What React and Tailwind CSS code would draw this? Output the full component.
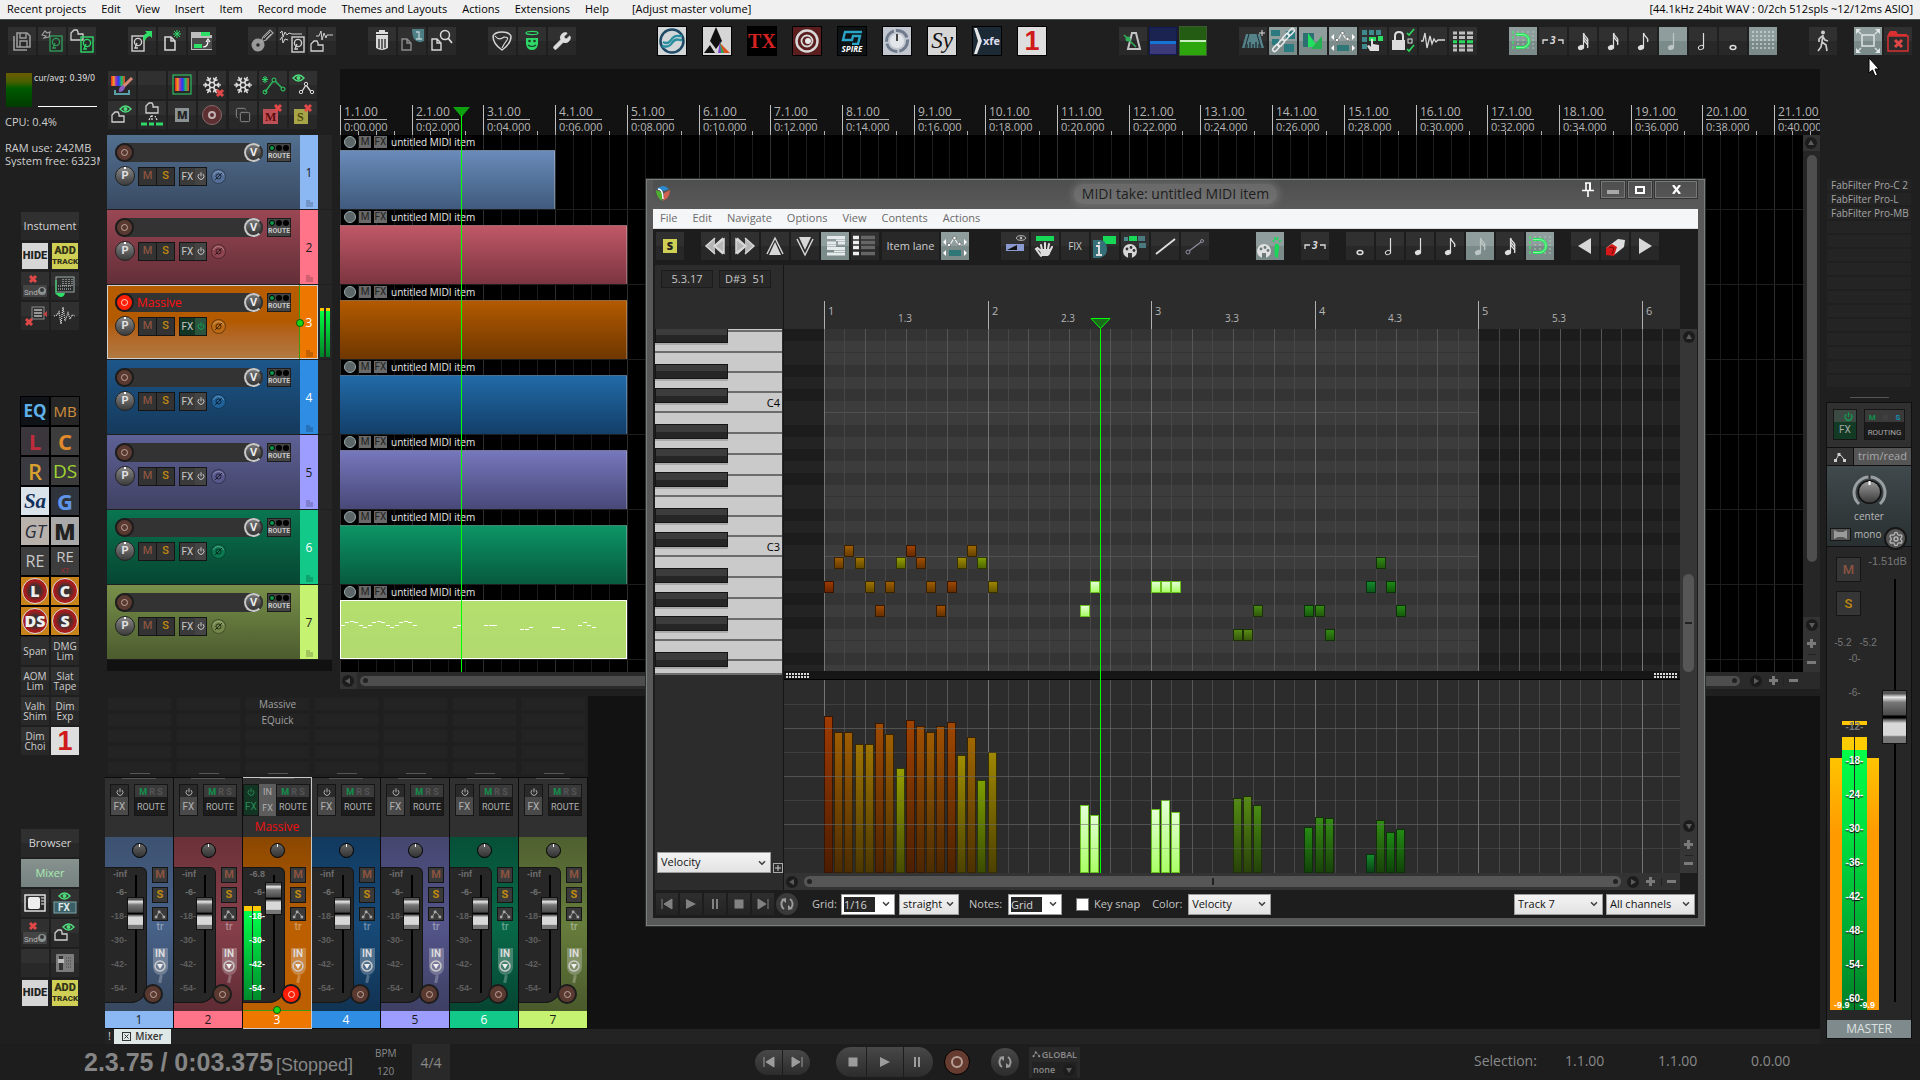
import React from 'react';
import { ChevronDown, Copy, Power, Settings, Snowflake, Wrench } from 'lucide-react';

const PX_PER_BAR = 71.7;
const PX_PER_16TH = 10.22;
const ROLL_LEFT = 40;
const TOP_PITCH = 66;

const tracks = [
  { id: 1, bars: 3, body: 'from-[#52708f] to-[#394a63]', item: 'from-[#6a8cba] to-[#3f5a7c]', strip: 'from-[#3d5271] via-[#48628a] to-[#37485f]', tag: 'bg-[#8bb7f3] text-[#1a1a1a]', ph: 'bg-[#54709a]' },
  { id: 2, bars: 4, body: 'from-[#9a4754] to-[#632f38]', item: 'from-[#c05867] to-[#7c3540]', strip: 'from-[#6b3139] via-[#87404b] to-[#5f2c34]', tag: 'bg-[#ff7488] text-[#1a1a1a]', ph: 'bg-[#8f4550]' },
  { id: 3, bars: 4, name: 'Massive', selected: true, body: 'from-[#b85c00] via-[#b35a00] to-[#b07a42]', item: 'from-[#b35a00] to-[#6f3700]', strip: 'from-[#8a4700] via-[#bb5f00] to-[#bb5f00]', tag: 'bg-[#ee7700] text-white', ph: 'bg-[#bd6a14]' },
  { id: 4, bars: 4, body: 'from-[#1c5689] to-[#153a5c]', item: 'from-[#226ba8] to-[#123f69]', strip: 'from-[#123a60] via-[#174a78] to-[#113353]', tag: 'bg-[#2f8de4] text-white', ph: 'bg-[#20629a]' },
  { id: 5, bars: 4, body: 'from-[#5e6196] to-[#404163]', item: 'from-[#7777bd] to-[#484878]', strip: 'from-[#45466f] via-[#54558a] to-[#3e3f63]', tag: 'bg-[#9d9dff] text-[#1a1a1a]', ph: 'bg-[#58588c]' },
  { id: 6, bars: 4, body: 'from-[#0a7550] to-[#064632]', item: 'from-[#0d9566] to-[#075a3e]', strip: 'from-[#065038] via-[#086a49] to-[#054532]', tag: 'bg-[#12c98a] text-white', ph: 'bg-[#0b7852]' },
  { id: 7, bars: 4, midi: true, body: 'from-[#78904a] to-[#4c5c2e]', item: 'from-[#b4e06e] to-[#b1d96f]', strip: 'from-[#4f6030] via-[#677d3c] to-[#4a5a2c]', tag: 'bg-[#c6f272] text-[#1a1a1a]', ph: 'bg-[#73884a]' },
];

// [sixteenth, pitch, velocity bar height]
const notes = [
  [0, 45, 157], [1, 47, 141], [2, 48, 141], [3, 47, 129], [4, 45, 129], [5, 43, 150], [6, 45, 139], [7, 47, 105],
  [8, 48, 153], [9, 47, 147], [10, 45, 141], [11, 43, 147], [12, 45, 151], [13, 47, 118], [14, 48, 136], [15, 47, 93],
  [16, 45, 121], [25, 43, 68, true], [26, 45, 58, true], [32, 45, 64, true], [33, 45, 73, true], [34, 45, 61, true],
  [40, 41, 75], [41, 41, 77], [42, 43, 68], [47, 43, 46], [48, 43, 56], [49, 41, 55], [53, 45, 19], [54, 47, 53],
  [55, 45, 41], [56, 43, 44],
];

const noteX = (i) => ROLL_LEFT + Math.round(i * PX_PER_16TH);
const isBlack = (p) => [1, 3, 6, 8, 10].includes(p % 12);

const noteFill = (h, selected, low) => {
  if (selected) return { background: 'linear-gradient(#e4ffd6, #a9ff66)', borderColor: '#6abf1e' };
  const hue = Math.round(22 + (157 - h) * 0.8);
  const sat = h > 80 ? 100 : 75;
  return {
    background: `linear-gradient(hsl(${hue} ${sat}% 31%), hsl(${hue} ${sat}% ${low}%))`,
    borderColor: `hsl(${hue} ${sat}% 11%)`,
  };
};

/* ---------- icons ---------- */

function Svg({ children, className = 'h-7 w-7', box = '0 0 28 28' }) {
  return (
    <svg viewBox={box} className={className} fill="none" aria-hidden="true">
      {children}
    </svg>
  );
}

const Cross = ({ x, y, s = 7 }) => (
  <path d={`M${x} ${y}l${s} ${s}M${x + s} ${y}l${-s} ${s}`} stroke="#e04848" strokeWidth="3" />
);
const Folder = ({ x, y, c = '#d0d0d0' }) => (
  <path d={`M${x} ${y + 10}V${y + 3}l3-3h3l1 2v2h5v6z`} stroke={c} strokeWidth="1.3" />
);
const Disk = ({ x, y, c = '#d0d0d0' }) => (
  <g stroke={c} strokeWidth="1.4">
    <rect x={x} y={y} width="12" height="15" />
    <circle cx={x + 6} cy={y + 6} r="3.6" />
    <path d={`M${x + 5} ${y + 7}l-2 5h3`} />
  </g>
);
const EyeMark = ({ x, y }) => (
  <g>
    <path d={`M${x} ${y + 3}q5.500-6 11 0q-5.500 6-11 0z`} stroke="#4fdc7c" strokeWidth="1.4" />
    <circle cx={x + 5.5} cy={y + 3} r="2" fill="#4fdc7c" />
  </g>
);

function Note({ flags = 0, open, whole, dim }) {
  const c = dim ? '#bcc6c4' : '#dedede';
  return (
    <Svg>
      {whole ? (
        <ellipse cx="14" cy="20.500" rx="2.800" ry="2" stroke={c} strokeWidth="1.6" />
      ) : (
        <>
          <ellipse cx="12" cy="20.500" rx="2.700" ry="2" fill={open ? 'none' : c} stroke={c} strokeWidth="1" transform="rotate(-20 12 20.500)" />
          <path d="M14.500 20V6" stroke={c} strokeWidth="1.2" />
        </>
      )}
      {Array.from({ length: flags }, (_, i) => (
        <path key={i} d={`M14.500 ${6 + i * 3}q1 3 3 4.500t1 4.500`} stroke={c} strokeWidth="1.3" />
      ))}
    </Svg>
  );
}

const Triplet = () => (
  <Svg>
    <path d="M4 17v-4h5M24 17v-4h-5" stroke="#dcdcdc" strokeWidth="1.3" />
    <text x="11" y="17" fontSize="10" fontWeight="700" fontStyle="italic" fontFamily="Open Sans, sans-serif" fill="#dcdcdc">3</text>
  </Svg>
);

const Magnet = () => (
  <Svg>
    <path d="M9 4v20M14 4v20M19 4v20M24 4v20" stroke="#a9c8b8" strokeDasharray="2 2" />
    <path d="M4 4v20" stroke="#2bff5a" strokeDasharray="3 2" />
    <path d="M7 7.500h6.500a6.500 6.500 0 0 1 0 13H7" stroke="#27e25a" strokeWidth="3" />
    <path d="M7 7.500h6.500a6.500 6.500 0 0 1 0 13H7" stroke="#9dffb5" strokeWidth="0.8" />
  </Svg>
);

const EnvItem = () => (
  <Svg>
    <rect x="8" y="18" width="12" height="6" fill="#2f7676" />
    <path d="M6 14l3-1 4-7 4 6 4 1" stroke="#eee" strokeWidth="1.2" />
    <g fill="#fff" stroke="#444" strokeWidth="0.6">
      <circle cx="8" cy="13" r="1.700" /><circle cx="13.500" cy="6" r="1.700" /><circle cx="18.500" cy="12" r="1.700" />
    </g>
    <path d="M2 10l3-3v6zM26 10l-3-3v6zM2 21l3-3v6zM26 21l-3-3v6z" fill="#fff" />
  </Svg>
);

const Envelope = ({ c = '#d0d0d0', className = 'h-7 w-7' }) => (
  <Svg className={className}>
    <path d="M5 21l7-12 6 4 5 8" stroke={c} strokeWidth="2" />
    <g fill={c}><rect x="2" y="18" width="6" height="6" /><rect x="9" y="6" width="6" height="6" /><rect x="20" y="18" width="6" height="6" /></g>
  </Svg>
);

const icons = {
  save: (
    <Svg>
      <path d="M9 6h10l3 3v11H9zM6 9v14h13" stroke="#9c9c9c" strokeWidth="1.6" />
      <path d="M12 6v5h6V6M12 20v-6h7v6" stroke="#9c9c9c" strokeWidth="1.4" />
    </Svg>
  ),
  load: (
    <Svg>
      <Disk x={12} y={9} c="#2f9a58" />
      <path d="M4 8l3-4 2 2 3-1-1 5-5 1 2-2z" stroke="#9c9c9c" strokeWidth="1.2" />
    </Svg>
  ),
  folderDisk: <Svg><Folder x={3} y={3} /><Disk x={13} y={10} c="#2fd868" /></Svg>,
  diskOut: <Svg><Disk x={4} y={9} /><path d="M15 12c0-4 2-5 4-6l-2-2h7v7l-2-2c-3 1-4 2-5 5z" fill="#2fe068" /></Svg>,
  newFile: (
    <Svg>
      <path d="M7 23V10h6l4 4v9zM13 10v4h4" stroke="#d8d8d8" strokeWidth="1.5" />
      <path d="M19 3v8M15 7h8M16 4l6 6M22 4l-6 6" stroke="#2fd868" />
    </Svg>
  ),
  openFolder: (
    <Svg>
      <path d="M3 23V5h10l2 3h9v15z" fill="#bdbdbd" />
      <rect x="13" y="5" width="9" height="4" fill="#2fe068" />
      <rect x="4" y="11" width="20" height="11" fill="#4a4a4a" />
      <rect x="6" y="17" width="8" height="4" fill="#2fe068" />
      <path d="M15 20q5 0 5-6M18 15l2-3 2 3" stroke="#fff" strokeWidth="1.2" />
    </Svg>
  ),
  cd: (
    <Svg>
      <circle cx="10" cy="18" r="6.500" fill="#9a9a9a" /><circle cx="10" cy="18" r="1.800" fill="#2b2b2b" />
      <path d="M13 15l2-5 7-7 3 3-7 7z" stroke="#a8a8a8" strokeWidth="1.2" /><path d="M16 11l6-6M18 12l5-5" stroke="#a8a8a8" />
    </Svg>
  ),
  waveDisk: <Svg><path d="M2 6l2-2 1 6 2-5 2 3 2-2 3 1h10M2 13l2-3 1 6 2-4 3 1" stroke="#cfcfcf" /><Disk x={14} y={10} /></Svg>,
  waveFolder: <Svg><path d="M8 9h3l2-5 1 9 2-7 2 5 1-3h6" stroke="#cfcfcf" /><Folder x={3} y={14} /></Svg>,
  trash: (
    <Svg>
      <path d="M8 6h12M11 4h6M8 9h12" stroke="#ddd" strokeWidth="2" />
      <path d="M8 10h12v11q-6 4-12 0z" fill="#d8d8d8" /><path d="M11 12v9M14 12v10M17 12v9" stroke="#333" strokeWidth="1.400" />
    </Svg>
  ),
  info: (
    <Svg>
      <path d="M4 23V12h5l4 4v7zM9 12v4h4" stroke="#8c8c8c" strokeWidth="1.400" />
      <path d="M14 2h12v12q-6 3-10-2-2-4-2-10z" fill="#4f7f86" />
      <path d="M18 5h3v7M18 12h6" stroke="#b9cfd2" strokeWidth="1.300" />
    </Svg>
  ),
  findFile: (
    <Svg>
      <path d="M4 23V12h5l4 4v7zM9 12v4h4" stroke="#d8d8d8" strokeWidth="1.400" />
      <circle cx="17" cy="8" r="4.500" stroke="#d8d8d8" strokeWidth="1.500" /><path d="M20 11l4 5" stroke="#d8d8d8" strokeWidth="1.800" />
    </Svg>
  ),
  pick: (
    <Svg>
      <path d="M14 23C8 19 5 14 5 9q2-4 9-4t9 4c0 5-3 10-9 14z" stroke="#d6d6d6" strokeWidth="1.500" />
      <path d="M7 9q4 5 9 1q5 0 3 3q-3 4-5 8" stroke="#d6d6d6" strokeWidth="1.200" />
    </Svg>
  ),
  angel: (
    <Svg>
      <ellipse cx="14" cy="6" rx="6" ry="1.600" stroke="#2fd868" strokeWidth="1.300" />
      <path d="M8 11h12v6q-1 6-6 6t-6-6z" fill="#2fd868" />
      <circle cx="11.500" cy="14" r="1.300" fill="#1a3a22" /><circle cx="16.500" cy="14" r="1.300" fill="#1a3a22" />
      <path d="M10 18q4 3 8 0" stroke="#1a3a22" strokeWidth="1.200" />
    </Svg>
  ),
  metronome: (
    <Svg>
      <path d="M9 22l4-16h4l4 16z" stroke="#c4c4c4" strokeWidth="2" />
      <path d="M5 8l12 12" stroke="#2fae58" strokeWidth="1.600" /><circle cx="9" cy="12" r="2.500" fill="#2fae58" />
    </Svg>
  ),
  metroAdd: (
    <Svg>
      <path d="M7 7h14l4 14H3z" fill="#56838a" /><path d="M10 7L6 21M18 7l4 14" stroke="#1e2a2c" />
      <path d="M8 17v4M11 15v6M14 17v4M17 15v6M20 17v4" stroke="#111" /><path d="M23 3v6M20 6h6" stroke="#ddd" />
    </Svg>
  ),
  chain: (
    <Svg>
      <g fill="#2b7a80"><rect x="2" y="3" width="9" height="6" /><rect x="17" y="4" width="9" height="8" /><rect x="3" y="12" width="7" height="6" /><rect x="15" y="17" width="10" height="8" /></g>
      <g stroke="#e6eaea" strokeWidth="1.500">
        <rect x="-4" y="-2" width="8" height="4" rx="2" transform="translate(7 21) rotate(-48)" />
        <rect x="-4" y="-2" width="8" height="4" rx="2" transform="translate(12 16) rotate(-48)" />
        <rect x="-4" y="-2" width="8" height="4" rx="2" transform="translate(17 10) rotate(-48)" />
        <rect x="-4" y="-2" width="8" height="4" rx="2" transform="translate(22 5) rotate(-48)" />
      </g>
    </Svg>
  ),
  crossfade: (
    <Svg>
      <rect x="4" y="6" width="11" height="14" fill="#2b6f73" /><path d="M9 6v14h10z" fill="#24e060" />
      <path d="M23 22V9L12 22z" fill="#24b050" />
    </Svg>
  ),
  matrix: (
    <Svg>
      <g fill="#3e8a8e"><rect x="3" y="3" width="5" height="5" /><rect x="10" y="3" width="5" height="5" /><rect x="17" y="3" width="5" height="5" /><rect x="3" y="10" width="5" height="5" /><rect x="3" y="17" width="5" height="5" /></g>
      <rect x="10" y="10" width="7" height="4" fill="#2be060" /><rect x="19" y="9" width="5" height="5" fill="#2be060" />
      <path d="M11 24l-3-5 2-1 2 2v-8h2v5l6 1v6z" fill="#dedede" />
    </Svg>
  ),
  lock: (
    <Svg>
      <path d="M6 13V9q0-4 4-4t4 4v4" stroke="#ddd" strokeWidth="2" /><rect x="3" y="13" width="13" height="10" fill="#ddd" />
      <rect x="19" y="12" width="4" height="4" stroke="#ddd" />
      <path d="M18 6l2 2 5-6M18 22l2 2 5-6" stroke="#2bd860" strokeWidth="1.600" />
    </Svg>
  ),
  wave: <Svg><path d="M2 14h2l2-8 2 15 3-12 2 8 2-5 2 3 2-2h7" stroke="#d6d6d6" strokeWidth="1.300" /></Svg>,
  gridLanes: (
    <Svg>
      <g stroke="#bdbdbd" strokeWidth="3"><path d="M4 6h4M10 6h6M18 6h6M4 10.500h4M10 10.500h6M18 10.500h6M4 19h4M10 19h6M18 19h6M4 23h4M10 23h6M18 23h6" /></g>
      <path d="M4 14.700h4M10 14.700h6M18 14.700h6" stroke="#2ad860" strokeWidth="3" />
    </Svg>
  ),
  gridDots: (
    <Svg><path d="M4 4v20M8 4v20M12 4v20M16 4v20M20 4v20M24 4v20" stroke="#e8eeee" strokeDasharray="2 2" /></Svg>
  ),
  walk: (
    <Svg>
      <circle cx="14" cy="5.500" r="2" fill="#ccc" />
      <path d="M14 8l-1 7 4 3 1 6M13 15l-1 5-3 4M13 9l-3 3v3M14 10l2 3 3 1" stroke="#ccc" strokeWidth="1.700" />
    </Svg>
  ),
  expand: (
    <Svg>
      <rect x="8" y="8" width="12" height="11" stroke="#dfe5e5" strokeWidth="1.500" />
      <path d="M7 7L3 3M21 7l4-4M7 21l-4 4M21 21l4 4" stroke="#dfe5e5" strokeWidth="1.200" />
      <path d="M2 2h5L2 7zM26 2h-5l5 5zM2 26v-5l5 5zM26 26v-5l-5 5z" fill="#dfe5e5" />
    </Svg>
  ),
  closeProj: (
    <Svg><path d="M4 24V7l2-3h6l2 3h9v3" fill="#d83030" /><path d="M4 24V9h20v15z" fill="#2b2b2b" stroke="#d83030" strokeWidth="1.500" /><Cross x={11} y={13} s={7} /></Svg>
  ),
  spectrumBrush: (
    <Svg>
      <rect x="3" y="5" width="14" height="10" fill="url(#rainbow)" />
      <path d="M24 7l-9 9" stroke="#d68a78" strokeWidth="3" /><path d="M15 14q-5 2-4 7 5 0 6-5z" fill="#8b5fc0" />
      <path d="M7 19v4h14v-4" stroke="#5aa0a8" strokeWidth="2" />
    </Svg>
  ),
  spectrum: <Svg><rect x="5" y="4" width="18" height="19" stroke="#2fd868" /><rect x="7" y="7" width="14" height="13" fill="url(#rainbow)" /></Svg>,
  envAdd: (
    <Svg>
      <path d="M6 21l9-12 9 9" stroke="#2fae58" strokeWidth="1.500" /><circle cx="6" cy="21" r="2" stroke="#2fd868" /><circle cx="15" cy="9" r="2" fill="#2b2b2b" stroke="#2fd868" /><circle cx="24" cy="18" r="2" fill="#2b2b2b" stroke="#2fd868" />
      <path d="M6 5v7M3 8.500h6M4 6l4 5M8 6l-4 5" stroke="#2fd868" />
    </Svg>
  ),
  envEye: (
    <Svg>
      <EyeMark x={4} y={4} />
      <path d="M12 22l5-8 6 8" stroke="#ddd" strokeWidth="1.300" /><g fill="#2b2b2b" stroke="#ddd"><circle cx="12" cy="21" r="1.700" /><circle cx="17" cy="13" r="1.700" /><circle cx="23" cy="21" r="1.700" /></g>
    </Svg>
  ),
  folderEye: <Svg><Folder x={4} y={11} /><EyeMark x={12} y={5} /></Svg>,
  folderTree: (
    <Svg>
      <Folder x={8} y={2} /><path d="M11 19l2-4M14 19v-5M19 19l-2-4" stroke="#ddd" strokeWidth="1.300" strokeDasharray="2 1" />
      <path d="M3 23h6M11 23h5M18 23h7" stroke="#2fd868" strokeWidth="3" />
    </Svg>
  ),
  sndOff: (
    <Svg>
      <Cross x={9} y={4} s={6} /><rect x="2" y="13" width="24" height="12" rx="1" fill="#444" />
      <text x="3" y="23" fontSize="8" fill="#b8b8b8" fontFamily="Roboto, sans-serif">Snd</text>
      <circle cx="21" cy="19" r="4" fill="#8a9294" /><circle cx="21" cy="18" r="2" fill="#333" />
    </Svg>
  ),
  mixGrid: (
    <Svg>
      <rect x="5" y="5" width="18" height="15" stroke="#9aa" /><path d="M12 7v8M15 7v8M18 7v8M21 7v8M7 17h14M7 14h14" stroke="#cfd6d6" strokeDasharray="1 1" />
      <path d="M5 8v14h8" stroke="#2fe068" /><path d="M5 21h9q-1 4-4 4t-5-4z" fill="#2fe068" />
    </Svg>
  ),
  listOff: (
    <Svg>
      <rect x="11" y="5" width="12" height="12" stroke="#8a8a8a" />
      <path d="M13 8h8M13 11h8M13 14h8" stroke="#b8b8b8" strokeWidth="1.300" /><path d="M26 9v6l-4-3z" fill="#c04040" /><Cross x={5} y={17} s={6} />
    </Svg>
  ),
  dotWave: <Svg><path d="M3 14l3-1 2-3 2 12 2-17 2 14 3-8 2 6 2-4 3 1" stroke="#d8d8d8" strokeWidth="1.300" strokeDasharray="1 1" /></Svg>,
  monitor: (
    <Svg>
      <rect x="4" y="6" width="20" height="16" stroke="#e0e0e0" strokeWidth="1.500" /><rect x="7" y="8" width="12" height="12" rx="2" fill="#eee" />
      <path d="M20 9h3M20 12h3M20 15h3" stroke="#eee" />
    </Svg>
  ),
  fxEye: (
    <Svg>
      <EyeMark x={8} y={4} /><rect x="3" y="13" width="22" height="11" fill="#3a5f64" stroke="#7fa6aa" />
      <text x="7" y="22" fontSize="10" fontWeight="700" fill="#dfe8e8" fontFamily="Roboto, sans-serif">FX</text>
    </Svg>
  ),
  strip: (
    <Svg>
      <rect x="5" y="5" width="18" height="18" rx="1" fill="#7c7c7c" /><rect x="8" y="7" width="4" height="14" fill="#333" /><rect x="7" y="10" width="6" height="4" fill="#bbb" />
      <path d="M15 9h6M15 12h6M15 15h6M15 18h6" stroke="#444" strokeDasharray="1 1" />
    </Svg>
  ),
};

function ToolButton({ label, active, children }) {
  return (
    <button
      type="button"
      aria-label={label}
      className={
        active
          ? 'flex h-7 w-7 shrink-0 items-center justify-center overflow-hidden bg-[linear-gradient(#8f9e9c_0_50%,#7b8b89_50%)]'
          : 'flex h-7 w-7 shrink-0 items-center justify-center overflow-hidden bg-[linear-gradient(#303030_0_50%,#282828_50%)]'
      }
    >
      {children}
    </button>
  );
}

const Group = ({ children, className = '' }) => <div className={`flex gap-[2px] ${className}`}>{children}</div>;

/* ---------- menu and main toolbar ---------- */

function MenuBar() {
  const items = ['Recent projects', 'Edit', 'View', 'Insert', 'Item', 'Record mode', 'Themes and Layouts', 'Actions', 'Extensions', 'Help', '[Adjust master volume]'];
  return (
    <header className="flex h-5 items-center justify-between border-b border-[#4a5250] bg-[#f0f0f0] px-[7px] pb-px text-[11px] leading-4 text-black">
      <nav className="flex gap-[15px]">
        {items.map((m, i) => (
          <button key={m} type="button" className={i === 10 ? 'ml-2' : ''}>{m}</button>
        ))}
      </nav>
      <span>[44.1kHz 24bit WAV : 0/2ch 512spls ~12/12ms ASIO]</span>
    </header>
  );
}

function Logos() {
  const box = 'flex h-[30px] w-[30px] items-center justify-center overflow-hidden border border-black';
  return (
    <div className="ml-[81px] flex gap-[15px]">
      <button type="button" aria-label="Synth 1" className={`${box} bg-[#d3d7d8]`}>
        <Svg>
          <circle cx="14" cy="14" r="11.500" stroke="#1f4a66" strokeWidth="2.500" />
          <path d="M5 15q5 3 8-2t8-4h3M4 19q7 2 10-3t8-3h2" stroke="#2a8fa0" strokeWidth="2.400" />
        </Svg>
      </button>
      <button type="button" aria-label="Prism" className={`${box} bg-[#d6d6d6]`}>
        <Svg>
          <path d="M13 0l6 14-6 8-6-8z" fill="#111" /><path d="M1 26l6-8 5 8z" fill="#111" />
          <path d="M15 26l2-12 2 12z" fill="#7a3fd0" /><path d="M18 26l-1-11 5 11z" fill="#2fa84f" /><path d="M21 26l-4-10 10 10z" fill="#d85020" />
        </Svg>
      </button>
      <button type="button" className={`${box} bg-black font-['Liberation_Serif'] text-[20px] font-bold text-[#d42222]`}>TX</button>
      <button type="button" aria-label="Battery" className={`${box} bg-[#5b1e1e]`}>
        <Svg>
          <circle cx="14" cy="14" r="10.500" fill="#5b1e1e" stroke="#d8d8d8" strokeWidth="2.500" />
          <circle cx="14" cy="14" r="5.500" stroke="#d8d8d8" strokeWidth="1.800" /><circle cx="15" cy="14" r="3" fill="#e8e8e8" />
        </Svg>
      </button>
      <button type="button" className={`${box} flex-col bg-[#0d1214] text-[8px] font-bold leading-[8px] text-white italic`}>
        <Svg className="h-[15px] w-6" box="0 0 24 15"><path d="M22 2H5L3 10h9l1-4h7l-2 8h-6" stroke="#2aa5c8" strokeWidth="2.400" /></Svg>
        SPIRE
      </button>
      <button type="button" aria-label="Knob synth" className={`${box} bg-[#c3c8d0]`}>
        <Svg>
          <circle cx="14" cy="14" r="10.500" stroke="#6f7a8c" strokeWidth="3" strokeDasharray="14 2" /><circle cx="14" cy="14" r="7" fill="#e2e5ea" />
          <path d="M14 7v7" stroke="#444" strokeWidth="2" />
        </Svg>
      </button>
      <button type="button" className={`${box} bg-[#d6d6d6] font-['Liberation_Serif'] text-[23px] text-[#111] italic`}>Sy</button>
      <button type="button" className={`${box} bg-[#1c2a36] text-[11px] font-bold text-[#dde]`}>
        <Svg className="h-7 w-[9px] shrink-0" box="0 0 9 28"><path d="M0 1h3l5 13-5 13H0l4-13z" fill="#e6e6e6" /></Svg>
        xfe
      </button>
      <button type="button" className={`${box} bg-[#dedede] font-['Liberation_Sans'] text-[27px] font-bold text-[#cf1b1b]`}>1</button>
    </div>
  );
}

function MainToolbar() {
  return (
    <div className="flex h-[49px] items-center bg-[#1f1f1f] pb-[9px] pl-2 pt-[2px]">
      <div className="flex gap-8">
        <Group>
          <ToolButton label="Save project">{icons.save}</ToolButton>
          <ToolButton label="Load">{icons.load}</ToolButton>
          <ToolButton label="Open project folder">{icons.folderDisk}</ToolButton>
        </Group>
        <Group>
          <ToolButton label="Render">{icons.diskOut}</ToolButton>
          <ToolButton label="New project">{icons.newFile}</ToolButton>
          <ToolButton label="Open project">{icons.openFolder}</ToolButton>
        </Group>
        <Group>
          <ToolButton label="Burn disc">{icons.cd}</ToolButton>
          <ToolButton label="Save waves">{icons.waveDisk}</ToolButton>
          <ToolButton label="Wave folder">{icons.waveFolder}</ToolButton>
        </Group>
        <Group>
          <ToolButton label="Clean project">{icons.trash}</ToolButton>
          <ToolButton label="Project info">{icons.info}</ToolButton>
          <ToolButton label="Find">{icons.findFile}</ToolButton>
        </Group>
        <Group>
          <ToolButton label="Guitar tools">{icons.pick}</ToolButton>
          <ToolButton label="Angel">{icons.angel}</ToolButton>
          <ToolButton label="Preferences"><Wrench className="h-5 w-5 fill-[#ddd] text-[#ddd]" strokeWidth={1} /></ToolButton>
        </Group>
      </div>
      <Logos />
      <div className="ml-auto flex items-center gap-8 pr-2">
        <Group className="items-center">
          <ToolButton label="Metronome">{icons.metronome}</ToolButton>
          <button type="button" aria-label="Sync view" className="h-7 w-7 border border-[#101a55] bg-[linear-gradient(#1b2350_0_50%,#1573d6_50%_60%,#3c3a78_60%)]" />
          <button type="button" aria-label="Monitor level" className="h-[30px] w-7 border border-[#3a5a30] bg-[linear-gradient(#245c14_0_48%,#c8f0c0_48%_54%,#2da50c_54%)]" />
        </Group>
        <Group>
          <ToolButton label="Tempo">{icons.metroAdd}</ToolButton>
          <ToolButton label="Group items" active>{icons.chain}</ToolButton>
          <ToolButton label="Auto crossfade" active>{icons.crossfade}</ToolButton>
          <ToolButton label="Move envelopes with items" active><EnvItem /></ToolButton>
          <ToolButton label="Matrix">{icons.matrix}</ToolButton>
          <ToolButton label="Lock">{icons.lock}</ToolButton>
          <ToolButton label="Waveform">{icons.wave}</ToolButton>
          <ToolButton label="Lanes">{icons.gridLanes}</ToolButton>
        </Group>
        <Group>
          <ToolButton label="Snap" active><Magnet /></ToolButton>
          <ToolButton label="Triplet"><Triplet /></ToolButton>
          <ToolButton label="1/32"><Note flags={3} /></ToolButton>
          <ToolButton label="1/16"><Note flags={2} /></ToolButton>
          <ToolButton label="1/8"><Note flags={1} /></ToolButton>
          <ToolButton label="1/4" active><Note dim /></ToolButton>
          <ToolButton label="1/2"><Note open /></ToolButton>
          <ToolButton label="1"><Note whole /></ToolButton>
          <ToolButton label="Grid lines" active>{icons.gridDots}</ToolButton>
        </Group>
        <div className="flex gap-[17px]">
          <ToolButton label="Walk">{icons.walk}</ToolButton>
          <Group>
            <ToolButton label="Full screen" active>{icons.expand}</ToolButton>
            <ToolButton label="Close project">{icons.closeProj}</ToolButton>
          </Group>
        </div>
      </div>
    </div>
  );
}

/* ---------- left side ---------- */

function HideAdd() {
  return (
    <>
      <button type="button" className="h-7 w-7 border border-[#222] bg-[#d6d6d6] font-['Roboto'] text-[11px] font-black text-[#222]">HIDE</button>
      <button type="button" className="h-7 w-7 border border-[#222] bg-[#cfcf55] font-['Roboto'] text-[8px] leading-[11px] font-black text-[#333318]">
        <span className="block text-[11px]">ADD</span>TRACK
      </button>
    </>
  );
}

const plugins = [
  ['EQ', 'bg-[#0f1318] text-[17px] font-bold text-[#5fb0e8]'], ['MB', 'bg-[#262626] text-[15px] text-[#d08f3c]'],
  ['L', 'bg-[#3a363c] text-[22px] font-bold text-[#c12c3c]'], ['C', 'bg-[#3d3d3d] text-[22px] font-bold text-[#e08a2a]'],
  ['R', 'bg-[#3a3a40] text-[22px] font-semibold text-[#d8a030]'], ['DS', 'bg-[#3a3a3a] text-[19px] text-[#9fd430]'],
  ['Sa', "bg-[#dbe3ea] font-['Liberation_Serif'] text-[21px] font-bold text-[#12305a] italic"], ['G', 'bg-[#2f343c] text-[22px] font-bold text-[#5f95e8]'],
  ['GT', 'bg-[#b9b1ab] text-[18px] text-[#2a2f3c] italic'], ['M', 'bg-[#a9a9a9] text-[22px] font-extrabold text-[#222]'],
  ['RE', 'bg-[#3d3d3d] text-[16px] text-[#c8c8c8]'], ['RE', 'bg-[#3d3d3d] text-[15px] text-[#c8c8c8]', 'XT'],
];

const shortcuts = ['Span', 'DMG Lim', 'AOM Lim', 'Slat Tape', 'Valh Shim', 'Dim Exp', 'Dim Choi'];

function Sidebar() {
  const text = 'w-full h-7 col-span-2 bg-[linear-gradient(#303030_0_50%,#282828_50%)] text-[11px] text-[#d4d4d4]';
  return (
    <aside className="w-[107px] shrink-0 bg-[#1f1f1f] pt-1 text-[#d0d0d0]">
      <div className="flex h-[35px] gap-[2px] overflow-hidden pl-[6px] pr-[10px]">
        <div className="h-[34px] w-[26px] shrink-0 bg-[linear-gradient(#6b5c00,#4a6000_25%,#005a00_45%,#003a00)]" />
        <div className="flex min-w-0 flex-1 flex-col justify-between overflow-hidden font-['DejaVu_Sans'] text-[8px] leading-3 whitespace-nowrap text-[#e0e0e0]">
          cur/avg: 0.39/0
          <i className="mb-px ml-1 h-px bg-white" />
        </div>
      </div>
      <div className="mt-[7px] pl-[5px] text-[11px] leading-[14px] whitespace-nowrap">
        <p>CPU: 0.4%</p>
        <p className="mt-3">RAM use: 242MB</p>
        <p className="w-[95px] overflow-hidden leading-3">System free: 6323M</p>
      </div>

      <div className="mt-[45px] ml-[21px] grid w-[58px] grid-cols-2 gap-[2px]">
        <button type="button" className={text}>Instument</button>
        <HideAdd />
        <ToolButton label="Remove sends">{icons.sndOff}</ToolButton>
        <ToolButton label="Routing grid">{icons.mixGrid}</ToolButton>
        <ToolButton label="Remove list">{icons.listOff}</ToolButton>
        <ToolButton label="Dotted wave">{icons.dotWave}</ToolButton>
      </div>

      <div className="mt-[66px] ml-[20px] grid w-[60px] grid-cols-2 gap-[2px] bg-black px-px py-px leading-none">
        {plugins.map(([name, cls, sub], i) => (
          <button key={i} type="button" className={`flex h-7 w-7 flex-col items-center justify-center leading-7 ${cls}`}>
            <span className={sub ? 'leading-[18px]' : ''}>{name}</span>
            {sub && <span className="text-[8px] leading-[10px] text-[#a02c2c]">{sub}</span>}
          </button>
        ))}
        {['L', 'C', 'DS', 'S'].map((n) => (
          <button key={n} type="button" className="flex h-7 w-7 items-center justify-center bg-[#c8821a]">
            <span className="flex h-[26px] w-[26px] items-center justify-center rounded-full border border-[#ddd] bg-[radial-gradient(#3a3030_30%,#a81c1c_60%)] text-[16px] font-extrabold text-[#eee]">{n}</span>
          </button>
        ))}
      </div>
      <div className="mt-px ml-[21px] grid w-[58px] grid-cols-2 gap-[2px]">
        {shortcuts.map((s) => (
          <button key={s} type="button" className="h-7 w-7 bg-[linear-gradient(#303030_0_50%,#282828_50%)] text-[10px] leading-[10px] text-[#cfcfcf]">{s}</button>
        ))}
        <button type="button" className="h-7 w-7 bg-[#dedede] font-['Liberation_Sans'] text-[27px] leading-7 font-bold text-[#cf1b1b]">1</button>
      </div>

      <div className="mt-[74px] ml-[21px] grid w-[58px] grid-cols-2 gap-[2px]">
        <button type="button" className={text}>Browser</button>
        <button type="button" className="col-span-2 h-7 bg-[linear-gradient(#87928f,#75827f)] text-[11px] text-[#a8ecb4]">Mixer</button>
        <ToolButton label="Monitor">{icons.monitor}</ToolButton>
        <ToolButton label="Show FX">{icons.fxEye}</ToolButton>
        <ToolButton label="Hide sends">{icons.sndOff}</ToolButton>
        <ToolButton label="Show folders">{icons.folderEye}</ToolButton>
        <ToolButton label="Empty" />
        <ToolButton label="Strip layout">{icons.strip}</ToolButton>
        <HideAdd />
      </div>
    </aside>
  );
}

/* ---------- track control panel ---------- */

function RecButton({ armed, className = 'h-[19px] w-[19px]' }) {
  return (
    <button
      type="button"
      aria-label="Record arm"
      className={`flex shrink-0 items-center justify-center rounded-full border-2 border-[#1c1c1c] ${armed ? 'bg-[#ff1e05]' : 'bg-[#5a3a30]'} ${className}`}
    >
      <span className={`h-[7px] w-[7px] rounded-full border ${armed ? 'border-[#ffd8d0]' : 'border-[#c0a8a0]'}`} />
    </button>
  );
}

function TrackPanel({ track }) {
  const { id, name, selected, body, tag, ph } = track;
  return (
    <div className="mb-px flex h-[74px]">
      <div className={`relative flex w-[211px] ${selected ? 'outline -outline-offset-1 outline-[#d0d0d0]' : ''}`}>
        <div className={`w-[193px] bg-linear-to-b pt-2 pl-2 ${body}`}>
          <div className="flex gap-1">
            <div className="flex h-[19px] w-[148px] items-center rounded-full bg-[#333]">
              <RecButton armed={selected} />
              <input aria-label={`Track ${id} name`} defaultValue={name} className="ml-[3px] h-4 w-full min-w-0 bg-transparent text-[12px] text-[#ff1010] outline-none" />
              <button type="button" aria-label="Volume" className="flex h-[19px] w-[19px] shrink-0 items-center justify-center rounded-full border-2 border-[#c8c8c8] border-r-[#333] bg-linear-to-b from-[#777] to-[#333] text-[11px] font-bold text-[#eee]">V</button>
            </div>
            <button type="button" className="h-[19px] w-6 border border-[#1c1c1c] bg-[#444] font-['Roboto'] text-[7px] leading-[8px] font-bold text-[#c8c8c8]">
              <span className="flex justify-center gap-px pb-px">
                <i className="h-[6px] w-[6px] rounded-full border border-black bg-[#0c9a48]" />
                <i className="h-[6px] w-[6px] rounded-full bg-black" />
                <i className="h-[6px] w-[6px] rounded-full bg-black" />
              </span>
              ROUTE
            </button>
          </div>
          <div className="mt-1 flex h-5 items-center font-['Roboto'] text-[11px]">
            <button type="button" aria-label="Pan" className="relative h-5 w-5 rounded-full border border-[#222] bg-linear-to-b from-[#8a8a8a] to-[#3c3c3c] font-bold text-[#e0e0e0]">
              P<i className="absolute top-0 left-2 h-[2px] w-[2px] bg-white" />
            </button>
            <div className="ml-[3px] flex h-[19px] w-[37px] border border-[#151515] bg-[#333] font-medium">
              <button type="button" aria-label="Mute" className="flex-1 border-r border-[#151515] text-[#8b5440]">M</button>
              <button type="button" aria-label="Solo" className="flex-1 text-[#c08a10]">S</button>
            </div>
            <div className={`ml-1 flex h-[19px] w-7 border border-[#151515] text-[10px] text-[#c8c8c8] ${selected ? 'bg-[#123524]' : 'bg-[#3a3a3a]'}`}>
              <button type="button" className="w-[15px]">FX</button>
              <button type="button" aria-label="Bypass effects" className={`flex flex-1 items-center justify-center ${selected ? 'bg-[#2c5540] text-[#12a050]' : 'bg-[#444]'}`}>
                <Power size={8} strokeWidth={3} />
              </button>
            </div>
            <button type="button" aria-label="Phase" className={`ml-1 flex h-[15px] w-[15px] items-center justify-center rounded-full border border-black/40 ${ph}`}>
              <Svg className="h-[13px] w-[13px]" box="0 0 13 13"><path d="M1 5a6 6 0 0 1 11 0" stroke="#fff" strokeOpacity="0.3" /><circle cx="6.500" cy="6.500" r="2.500" stroke="#000" strokeOpacity="0.6" /><path d="M3 10l7-7" stroke="#000" strokeOpacity="0.600" /></Svg>
            </button>
          </div>
        </div>
        <div className={`flex w-[18px] flex-col items-center justify-between pt-[30px] pb-[2px] text-[12px] leading-4 ${tag}`}>
          {id}
          <Svg className="h-[7px] w-[7px]" box="0 0 7 7"><path d="M0 0h4v2h3v5H0z" fill="#000" fillOpacity="0.180" /></Svg>
        </div>
        {selected && (
          <>
            <i className="absolute top-0 left-[192px] h-full w-px bg-[#3a9a10]" />
            <i className="absolute top-[34px] left-[189px] h-2 w-2 rounded-full border border-[#0a5a0a] bg-[#18d818]" />
          </>
        )}
      </div>
      <div className="flex w-[14px] items-end justify-center gap-[2px] bg-[#262626] pb-[2px]">
        {selected && [0, 1].map((n) => (
          <i key={n} className="h-[49px] w-1 bg-[linear-gradient(#ffc800_0_3px,#00ff40_3px,#008028)]" />
        ))}
      </div>
    </div>
  );
}

function TrackList() {
  return (
    <section className="flex w-[233px] shrink-0 flex-col bg-[#1f1f1f]">
      <div className="grid h-[66px] w-[210px] grid-cols-7 content-start gap-[2px] pt-[2px] pl-px">
        <ToolButton label="Colour brush">{icons.spectrumBrush}</ToolButton>
        <ToolButton label="Empty" />
        <ToolButton label="Colours">{icons.spectrum}</ToolButton>
        <ToolButton label="Unfreeze">
          <span className="relative"><Snowflake className="h-5 w-5 text-[#ddd]" /><Svg className="absolute -right-1 -bottom-1 h-3 w-3" box="0 0 12 12"><Cross x={3} y={3} s={6} /></Svg></span>
        </ToolButton>
        <ToolButton label="Freeze"><Snowflake className="h-5 w-5 text-[#ddd]" /></ToolButton>
        <ToolButton label="Add envelope">{icons.envAdd}</ToolButton>
        <ToolButton label="Show envelopes">{icons.envEye}</ToolButton>
        <ToolButton label="Show folder">{icons.folderEye}</ToolButton>
        <ToolButton label="Folder children">{icons.folderTree}</ToolButton>
        <ToolButton label="Mute"><span className="h-[14px] w-[14px] bg-[#8a9294] text-[11px] leading-[14px] font-extrabold text-[#222]">M</span></ToolButton>
        <ToolButton label="Record"><span className="flex h-5 w-5 items-center justify-center rounded-full border border-[#8a6a6a] bg-[#5c3030]"><i className="h-2 w-2 rounded-full border-2 border-[#c0b0b0]" /></span></ToolButton>
        <ToolButton label="Duplicate"><Copy className="h-4 w-4 text-[#888]" strokeWidth={1.5} /></ToolButton>
        <ToolButton label="Clear mutes">
          <Svg><rect x="4" y="8" width="15" height="15" fill="#c05058" /><text x="6" y="20" fontSize="12" fontWeight="700" fill="#5a0c0c" fontFamily="Liberation Serif, serif">M</text><Cross x={16} y={4} s={6} /></Svg>
        </ToolButton>
        <ToolButton label="Clear solos">
          <Svg><rect x="5" y="8" width="14" height="15" fill="#a8a448" /><text x="8" y="20" fontSize="12" fontWeight="700" fill="#4a480c" fontFamily="Liberation Serif, serif">S</text><Cross x={16} y={4} s={6} /></Svg>
        </ToolButton>
      </div>
      {tracks.map((t) => <TrackPanel key={t.id} track={t} />)}
      <div className="h-[11px] w-[225px] bg-[#111]" />
    </section>
  );
}

/* ---------- arrange view ---------- */

function ArrangeRuler() {
  return (
    <div className="relative h-[66px] shrink-0 overflow-hidden bg-[#121212] text-[#b4b4b4]">
      {Array.from({ length: 21 }, (_, i) => (
        <div key={i} className="absolute top-9 h-[30px] border-l border-[#c0c0c0] pl-[3px]" style={{ left: Math.round(i * PX_PER_BAR) }}>
          <p className="mt-px w-[43px] border-b border-[#b4b4b4] pb-px text-[12px] leading-3">{i + 1}.1.00</p>
          <p className="text-[11px] leading-[14px]">0:{String(i * 2).padStart(2, '0')}.000</p>
        </div>
      ))}
      {Array.from({ length: 84 }, (_, i) => (
        <i key={i} className="absolute bottom-0 h-1 w-px bg-[#b0b0b0]" style={{ left: Math.round((i * PX_PER_BAR) / 4) }} />
      ))}
      <Svg className="absolute top-[38px] left-[113px] h-[10px] w-[17px]" box="0 0 17 10"><path d="M0 0h17L8.500 10z" fill="#0fa010" /></Svg>
    </div>
  );
}

function MediaItem({ track }) {
  return (
    <div className="relative h-[75px] border-b border-[#1e1e1e]">
      <div className="flex h-[15px] items-center gap-[3px] pb-px pl-1 font-['Roboto'] text-[10px] leading-3 text-[#222]">
        <i className="h-[12px] w-[12px] rounded-full border border-[#9aa] bg-[#5c6668]" />
        <button type="button" className="w-3 bg-[#6a6a6a]">M</button>
        <button type="button" className="w-[13px] bg-[#6a6a6a]">FX</button>
        <span className="ml-px font-['Open_Sans'] text-[10px] whitespace-nowrap text-[#e8e8e8]">untitled MIDI item</span>
      </div>
      <div
        className={`relative h-[59px] bg-linear-to-b ${track.item} ${track.midi ? 'border border-white' : 'border-t border-r border-white/25'}`}
        style={{ width: Math.round(track.bars * PX_PER_BAR) }}
      >
        {track.midi && notes.map(([i, p]) => (
          <i key={i} className="absolute h-px w-1 bg-white" style={{ left: Math.round(i * 4.48), top: 20 + Math.round((48 - p) * 1.2) }} />
        ))}
      </div>
    </div>
  );
}

const Arrow = ({ dir }) => {
  const d = { up: 'M8 5l3 5H5z', down: 'M8 11l3-5H5z', left: 'M5 8l5-3v6z', right: 'M11 8L6 5v6z' }[dir];
  return <Svg className="h-4 w-4 shrink-0" box="0 0 16 16"><circle cx="8" cy="8" r="6" fill="#1c1c1c" /><path d={d} fill="#5c5c5c" /></Svg>;
};
const Plus = () => <Svg className="h-[9px] w-[9px] shrink-0" box="0 0 9 9"><path d="M4.500 0v9M0 4.500h9" stroke="#7a7a7a" strokeWidth="3" /></Svg>;
const Minus = () => <i className="h-[3px] w-[9px] shrink-0 bg-[#7a7a7a]" />;

function Arrange() {
  return (
    <section className="min-w-0 flex-1">
      <div className="relative">
        <ArrangeRuler />
        <div className="flex">
          <div className="relative h-[537px] flex-1 overflow-hidden bg-black">
            {Array.from({ length: 82 }, (_, i) => (
              <i key={i} className={`absolute top-0 h-full w-px ${i % 4 ? 'bg-[#1b1b1b]' : 'bg-[#2e2e2e]'}`} style={{ left: Math.round((i * PX_PER_BAR) / 4) }} />
            ))}
            {tracks.map((t) => <MediaItem key={t.id} track={t} />)}
          </div>
          <div className="flex w-[17px] flex-col items-center bg-[#262626]">
            <div className="w-full bg-[#333]"><Arrow dir="up" /></div>
            <div className="mt-1 h-[407px] w-[10px] rounded-full bg-[#4e4e4e]" />
            <div className="mt-auto flex h-[55px] w-full flex-col items-center justify-between bg-[#333] pb-2">
              <Arrow dir="down" /><Plus /><i className="h-px w-2 bg-[#222]" /><Minus />
            </div>
          </div>
        </div>
        <i className="absolute top-[46px] bottom-0 left-[121px] w-px bg-[#00ff00]" />
      </div>
      <div className="flex h-[17px] items-center bg-[#2a2a2a] pr-[22px]">
        <div className="flex h-full w-[17px] items-center bg-[#333]"><Arrow dir="left" /></div>
        <div className="ml-[3px] flex h-[10px] flex-1 items-center justify-between rounded-full bg-[#4e4e4e] px-[3px]">
          <i className="h-[5px] w-[5px] rounded-full bg-[#222]" /><i className="h-[5px] w-[5px] rounded-full bg-[#222]" />
        </div>
        <div className="ml-2 flex items-center gap-[5px]"><Arrow dir="right" /><Plus /><i className="h-2 w-px bg-[#222]" /><Minus /></div>
      </div>
    </section>
  );
}

/* ---------- mixer ---------- */

const capThumb =
  '[&::-webkit-slider-thumb]:appearance-none [&::-webkit-slider-thumb]:border [&::-webkit-slider-thumb]:border-[#111] [&::-webkit-slider-thumb]:bg-[linear-gradient(#555_0_5%,#e8e8e8_12%,#777_22%,#4a4a4a_46%,#000_48%_52%,#4a4a4a_54%,#d8d8d8_62%_85%,#777_88%)]';

function Fader({ label, value, size }) {
  return (
    <input
      type="range"
      aria-label={label}
      defaultValue={value}
      className={`block appearance-none bg-[linear-gradient(#000,#000)] bg-size-[2px_100%] bg-center bg-no-repeat [direction:rtl] [writing-mode:vertical-lr] ${size} ${capThumb}`}
    />
  );
}

function ChannelStrip({ track }) {
  const { id, name, selected, strip, tag } = track;
  const slots = selected ? ['Massive', 'EQuick', '', '', ''] : ['', '', '', '', ''];
  return (
    <div className="w-[69px]">
      <div className="h-20">
        {slots.map((s, i) => (
          <div key={i} className="mx-[2px] mb-[2px] flex h-[14px] items-center justify-center border border-[#202020] bg-[#232323] text-[10px] leading-3 text-[#a0a0a0]">
            {s || (i === 4 && <i className="mt-auto h-px w-5 bg-[#555]" />)}
          </div>
        ))}
      </div>
      <div className={`relative border border-l-0 ${selected ? 'border-l border-[#c8c8c8]' : 'border-[#0c0c0c]'}`}>
        <div className="h-[59px] bg-[#303030]">
          <i className="mx-auto block h-[6px] w-[34px] border-t border-[#555]" />
          <div className={`flex h-8 font-['Roboto'] text-[10px] text-[#b0b0b0] ${selected ? '' : 'gap-[5px] pl-[5px]'}`}>
            <button type="button" className={`flex flex-col items-center justify-between border border-[#161616] py-[3px] leading-[10px] ${selected ? 'w-4 bg-[#123524] text-[#2a8a55]' : 'w-[19px] bg-[linear-gradient(#2a2a2a_0_40%,#4a4a4a_40%)]'}`}>
              <Power size={8} strokeWidth={3} />FX
            </button>
            {selected && <button type="button" className="flex w-[17px] flex-col items-center justify-between bg-[#5c5c5c] py-[3px] text-[9px] leading-[10px]"><span>IN</span>FX</button>}
            <button type="button" className="w-[34px] border border-[#161616] bg-[linear-gradient(#3a3a3a_0_40%,#1c1c1c_40%)] text-[9px] leading-[15px]">
              <span className="block font-bold text-[#555]"><span className="text-[#12904c]">M</span> R S</span>ROUTE
            </button>
          </div>
          <p className="text-center text-[12px] leading-[21px] text-[#f01010]">{name}</p>
        </div>
        <div className={`flex h-[174px] flex-col bg-linear-to-b ${strip}`}>
          <div className="flex h-[30px] justify-center pt-[6px]">
            <button type="button" aria-label="Pan" className="flex h-[15px] w-[15px] justify-center rounded-full border border-black bg-linear-to-b from-[#666] to-[#333]"><i className="h-[3px] w-px bg-white" /></button>
          </div>
          <div className="relative flex h-[136px]">
            <div className="flex w-[42px] rounded-tr-md rounded-br-2xl border border-l-0 border-[#161616] bg-[#272727]">
              <div className={`relative w-[22px] text-right font-['Liberation_Sans'] text-[9px] font-bold ${selected ? 'text-white' : 'text-[#5f5f5f]'}`}>
                {selected && (
                  <div className="absolute top-[38px] left-px flex gap-px">
                    {[0, 1].map((n) => <i key={n} className="h-[94px] w-2 bg-[linear-gradient(#ffc800_0_5px,#00ff48_5px,#008a2c)]" />)}
                  </div>
                )}
                <p className="relative h-4 leading-3 text-[#6f6f6f]">{selected ? '-6.8' : '-inf'}</p>
                <p className="relative h-5 leading-4 text-[#6f6f6f]">-6-</p>
                <div className="relative leading-6">
                  <p>-18-</p><p>-30-</p><p>-42-</p><p>-54-</p>
                </div>
              </div>
              <div className="pt-[7px]"><Fader label={`Channel ${id} volume`} value={selected ? 92 : 74} size="h-[118px] w-[17px] [&::-webkit-slider-thumb]:h-[33px] [&::-webkit-slider-thumb]:w-[17px]" /></div>
            </div>
            <div className="flex flex-1 flex-col items-center font-['Roboto'] text-[11px] font-bold">
              <button type="button" aria-label="Mute" className="h-4 w-4 border border-[#161616] bg-[#3a3a3a] leading-[14px] text-[#8b5440]">M</button>
              <button type="button" aria-label="Solo" className="mt-1 h-4 w-4 border border-[#161616] bg-[#3a3a3a] leading-[14px] text-[#c08a10]">S</button>
              <button type="button" aria-label="Envelope" className="mt-1 flex h-[14px] w-4 items-center justify-center border border-[#161616] bg-[#3a3a3a]"><Envelope c="#aaa" className="h-3 w-3" /></button>
              <span className="h-4 text-[10px] leading-3 font-medium text-white/40">tr</span>
              <span className="mt-[11px] flex h-[27px] w-[15px] flex-col items-center rounded-b-full bg-white/25 text-[10px] leading-[12px] text-[#ddd]">
                IN
                <Svg className="h-3 w-3" box="0 0 12 12"><circle cx="6" cy="6" r="5" stroke="#ccc" strokeWidth="1.500" /><path d="M3 4h6L6 9z" fill="#eee" /></Svg>
              </span>
              <i className="h-2 w-[3px] rotate-12 bg-white/25" />
            </div>
            <RecButton armed={selected} className="absolute -bottom-px left-[38px] h-5 w-5" />
          </div>
        </div>
        <div className={`flex h-[17px] items-center justify-center text-[12px] ${tag}`}>{id}</div>
        {selected && (
          <>
            <i className="absolute bottom-[17px] left-0 h-px w-full bg-[#3a9a10]" />
            <i className="absolute bottom-[14px] left-[30px] h-2 w-2 rounded-full border border-[#0a5a0a] bg-[#18d818]" />
          </>
        )}
      </div>
    </div>
  );
}

function Mixer() {
  return (
    <section className="flex-1 bg-[#1f1f1f] pt-[7px]">
      <div className="bg-[#121212]">
        <div className="-ml-[2px] flex w-[483px] bg-[#1f1f1f] pt-px">
          {tracks.map((t) => <ChannelStrip key={t.id} track={t} />)}
        </div>
      </div>
      <div className="-ml-[2px] flex h-[15px] items-center bg-[#232323] text-[11px] text-[#ccc]">
        <span className="w-[9px] text-center">!</span>
        <button type="button" className="flex h-full w-[57px] items-center justify-center gap-1 bg-[#dfe8e6] text-[10px] font-semibold text-[#333]">
          <Svg className="h-[9px] w-[9px]" box="0 0 9 9"><rect x="0.500" y="0.500" width="8" height="8" stroke="#333" /><path d="M2.500 2.500l4 4M6.500 2.500l-4 4" stroke="#333" /></Svg>
          Mixer
        </button>
      </div>
    </section>
  );
}

/* ---------- master ---------- */

function Master() {
  const fx = ['FabFilter Pro-C 2', 'FabFilter Pro-L', 'FabFilter Pro-MB', ...Array(12).fill('')];
  const marks = [12, 18, 24, 30, 36, 42, 48, 54, 60];
  return (
    <aside className="flex w-[100px] shrink-0 flex-col bg-[#1f1f1f] pt-[110px] pr-2 pl-[6px]">
      <div className="mx-px h-[218px]">
        {fx.map((f, i) => (
          <div key={i} className="mb-[2px] h-3 overflow-hidden bg-[#242424] pl-1 text-[10px] leading-3 whitespace-nowrap text-[#a4a4a4]">{f}</div>
        ))}
      </div>
      <i className="mx-auto mb-1 block h-px w-[39px] bg-[#555]" />
      <div className="border border-[#101010] bg-[#272727]">
        <div className="flex h-[44px] gap-[7px] bg-[#303030] px-[6px] pt-[6px] font-['Roboto'] text-[10px] text-[#a8a8a8]">
          <button type="button" className="flex h-[31px] w-6 flex-col justify-between border border-[#161616] bg-[linear-gradient(#3b4a42_0_40%,#123a24_40%)] px-[3px] py-[2px]">
            <Power size={9} strokeWidth={3} className="self-end text-[#12a050]" />FX
          </button>
          <button type="button" className="h-[31px] w-[41px] border border-[#161616] bg-[linear-gradient(#3a3a3a_0_40%,#1c1c1c_40%)] text-[8px] leading-[15px]">
            <span className="flex justify-around font-bold text-[#444]"><span className="text-[#12904c]">M</span><span>R</span><span className="text-[#1590b8]">S</span></span>ROUTING
          </button>
        </div>
        <div className="flex h-[19px] border-y border-[#101010]">
          <button type="button" aria-label="Envelopes" className="flex w-[26px] items-center justify-center bg-[#333]"><Envelope className="h-[14px] w-[14px]" /></button>
          <button type="button" className="flex-1 border-l border-[#101010] bg-[#555] text-[11px] text-[#a8a8a8]">trim/read</button>
        </div>
        <div className="relative h-[81px] border-b border-[#101010] bg-linear-to-b from-[#40494c] to-[#293032] pt-2 text-[11px] leading-4 text-[#b8b8b8]">
          <Svg className="mx-auto h-[35px] w-[35px]" box="0 0 35 35">
            <path d="M7 30a15.500 15.500 0 1 1 21 0" stroke="#9aa0a2" strokeWidth="3" />
            <circle cx="17.500" cy="18" r="12" fill="#111" /><circle cx="17.500" cy="18" r="10.500" fill="url(#knob)" />
            <path d="M17.500 1v4" stroke="#333" strokeWidth="2" /><path d="M17.500 7v4" stroke="#fff" strokeWidth="2" />
          </Svg>
          <p className="text-center text-[10px] leading-[14px]">center</p>
          <div className="mt-[3px] flex items-center gap-[3px] pl-[3px]">
            <button type="button" aria-label="Mono" className="flex h-[13px] w-[21px] items-center justify-center border border-[#161616] bg-[#555]">
              <Svg className="h-[9px] w-[13px]" box="0 0 13 9"><path d="M0 0l4 2h5l4-2v9L9 7H4L0 9z" fill="#9a9a9a" /></Svg>
            </button>
            <span className="text-[10px]">mono</span>
          </div>
          <button type="button" aria-label="Settings" className="absolute right-1 -bottom-1 flex h-[23px] w-[23px] items-center justify-center rounded-full border-2 border-[#161616] bg-[#555]">
            <Settings size={16} className="text-[#b8b8b8]" />
          </button>
        </div>
        <div className="relative flex h-[473px] font-['Liberation_Sans'] text-[10px]">
          <div className="w-[56px]">
            <div className="flex flex-col gap-[9px] pt-[10px] pl-[9px] font-['Roboto'] text-[13px] font-medium">
              <button type="button" aria-label="Master mute" className="h-[25px] w-[25px] border border-[#161616] bg-[#363636] text-[#8b5440]">M</button>
              <button type="button" aria-label="Master solo" className="h-[25px] w-[25px] border border-[#161616] bg-[#363636] text-[#c08a10]">S</button>
            </div>
            <div className="mt-[21px] flex justify-center gap-2 pl-[2px] leading-3 text-[#777]"><span>-5.2</span><span>-5.2</span></div>
            <p className="mt-1 text-center leading-3 text-[#777]">-0-</p>
            <p className="mt-[22px] text-center leading-3 text-[#777]">-6-</p>
            <div className="relative mt-[22px] ml-[3px] h-[289px] w-[49px]">
              <i className="absolute inset-x-3 top-0 h-1 bg-[#ffc800]" />
              <i className="absolute inset-x-0 top-[37px] bottom-0 bg-[linear-gradient(#ffc400,#ff9a00_30%)]" />
              <i className="absolute inset-x-3 top-4 bottom-0 bg-[linear-gradient(#ffcc00_0_13px,#00ff48_13px,#00e040_35%,#008028)]" />
              <i className="absolute top-0 bottom-0 left-6 w-px bg-[#222]" />
              <div className="relative text-center font-bold text-white">
                {marks.map((m, i) => (
                  <p key={m} className={`h-[34px] leading-3 ${i ? '[text-shadow:0_1px_1px_#000]' : 'text-[#777]'}`}>-{m}-</p>
                ))}
              </div>
              <div className="absolute inset-x-1 bottom-0 flex justify-between text-[9px] leading-[10px] font-bold text-white"><span>-9.9</span><span>-9.9</span></div>
            </div>
          </div>
          <div className="flex flex-1 flex-col items-center pr-1">
            <p className="mt-1 mb-[8px] -ml-[14px] h-5 text-[11px] leading-5 text-[#777]">-1.51dB</p>
            <Fader label="Master volume" value={70} size="h-[423px] w-[25px] [&::-webkit-slider-thumb]:h-[54px] [&::-webkit-slider-thumb]:w-[25px]" />
          </div>
        </div>
        <div className="flex h-[18px] items-center justify-center bg-[#7f8a8c] text-[12px] text-[#dde2e2]">MASTER</div>
      </div>
    </aside>
  );
}

/* ---------- transport ---------- */

const glyph = {
  prev: <Svg className="h-3 w-3" box="0 0 12 12"><path d="M1 1v10M11 1v10L3 6z" fill="#9c9c9c" stroke="#9c9c9c" /></Svg>,
  next: <Svg className="h-3 w-3" box="0 0 12 12"><path d="M11 1v10M1 1v10l8-5z" fill="#9c9c9c" stroke="#9c9c9c" /></Svg>,
  stop: <Svg className="h-3 w-3" box="0 0 12 12"><path d="M1.500 1.500h9v9h-9z" fill="#9c9c9c" /></Svg>,
  play: <Svg className="h-3 w-3" box="0 0 12 12"><path d="M1 1l10 5-10 5z" fill="#9c9c9c" /></Svg>,
  pause: <Svg className="h-3 w-3" box="0 0 12 12"><path d="M4 1v10M8 1v10" stroke="#9c9c9c" strokeWidth="2" /></Svg>,
  loop: (
    <Svg className="h-4 w-4" box="0 0 16 16">
      <path d="M5 13a6 6 0 0 1-1-9M11 3a6 6 0 0 1 1 9" stroke="#9c9c9c" strokeWidth="2" />
      <path d="M2 3l5-1v5zM14 13l-5 1V9z" fill="#9c9c9c" />
    </Svg>
  ),
};

function Transport() {
  const pill = 'flex items-center justify-center bg-linear-to-b from-[#484848] to-[#2c2c2c]';
  return (
    <footer className="flex h-9 items-center bg-[#1d1d1d] text-[#8a8a8a]">
      <div className="flex w-[375px] items-baseline gap-[3px] pl-[84px] font-['Liberation_Sans'] text-[#858585]">
        <span className="text-[25px] leading-8 font-bold whitespace-nowrap">2.3.75 / 0:03.375</span>
        <span className="text-[18px]">[Stopped]</span>
      </div>
      <div className="w-[37px] text-[10px] leading-[18px]"><p>BPM</p><p className="pl-[2px]">120</p></div>
      <button type="button" className="h-9 w-[38px] bg-[#292929] text-[14px]">4/4</button>
      <div className="ml-[305px] flex gap-px">
        <button type="button" aria-label="Go to start" className={`${pill} h-[25px] w-[27px] rounded-l-full`}>{glyph.prev}</button>
        <button type="button" aria-label="Go to end" className={`${pill} h-[25px] w-[27px] rounded-r-full`}>{glyph.next}</button>
      </div>
      <div className="ml-[26px] flex gap-px">
        <button type="button" aria-label="Stop" className={`${pill} h-[30px] w-[30px] rounded-l-full pl-[3px]`}>{glyph.stop}</button>
        <button type="button" aria-label="Play" className={`${pill} h-[30px] w-9`}>{glyph.play}</button>
        <button type="button" aria-label="Pause" className={`${pill} h-[30px] w-[29px] rounded-r-full pr-[3px]`}>{glyph.pause}</button>
      </div>
      <button type="button" aria-label="Record" className="ml-[11px] flex h-[26px] w-[26px] items-center justify-center rounded-full border border-black bg-[#663c30]"><i className="h-3 w-3 rounded-full border-2 border-[#b8a098]" /></button>
      <button type="button" aria-label="Repeat" className={`${pill} ml-[21px] h-7 w-7 rounded-full`}>{glyph.loop}</button>
      <div className="ml-[10px] h-[31px] w-[51px] bg-[#292929] px-[3px] text-[9px] font-semibold">
        <p className="flex items-center gap-px leading-[15px]"><Envelope c="#999" className="h-3 w-3" />GLOBAL</p>
        <button type="button" className="flex w-full items-center justify-between bg-[#222] pl-px leading-[14px]">none<Arrow dir="down" /></button>
      </div>
      <div className="ml-auto flex w-[446px] pb-1 text-[14px]">
        <span className="w-[91px]">Selection:</span><span className="w-[93px]">1.1.00</span><span className="w-[93px]">1.1.00</span><span>0.0.00</span>
      </div>
    </footer>
  );
}

/* ---------- MIDI editor window ---------- */

function Select({ id, label, value, width, combo }) {
  return (
    <span className={`relative flex h-[21px] shrink-0 items-center border border-[#9c9c9c] ${combo ? 'bg-white p-[2px]' : 'bg-linear-to-b from-[#f4f4f4] to-[#e2e2e2]'} ${width}`}>
      <select
        id={id}
        aria-label={label}
        className={combo ? 'h-[15px] w-[31px] appearance-none bg-[#262626] text-[11px] leading-[15px] text-[#d4d4d4]' : 'h-full w-full appearance-none pl-[3px] text-[11px] text-[#111]'}
      >
        <option>{value}</option>
      </select>
      <ChevronDown className="pointer-events-none absolute right-[3px] h-[10px] w-[10px] text-[#444]" strokeWidth={4} />
    </span>
  );
}

const whiteKeys = [3, 21, 20, 20, 20, 21, 21, 21, 21, 20, 20, 20, 21, 21, 21, 21, 20, 14];
const rows = Array.from({ length: 29 }, (_, i) => TOP_PITCH - i);

function Piano() {
  return (
    <div className="relative h-[346px] w-[127px] overflow-hidden bg-[#cacaca] text-right text-[11px] text-black">
      {whiteKeys.map((h, i) => (
        <div key={i} className="box-border border-b-2 border-[#6c6c6c] pr-[2px] leading-[19px]" style={{ height: h }}>
          {i === 4 && 'C4'}
          {i === 11 && 'C3'}
        </div>
      ))}
      {rows.map((p, i) => isBlack(p) && (
        <i key={p} className="absolute left-0 h-[15px] w-[73px] border border-[#151515] bg-[linear-gradient(#3c3c3c_0_50%,#262626_50%)] shadow-[0_2px_0_#aaa]" style={{ top: i * 12 - 1 }} />
      ))}
    </div>
  );
}

function GridLines() {
  return Array.from({ length: 42 }, (_, i) => (
    <i
      key={i}
      className={`absolute top-0 h-full w-px ${i % 8 === 0 ? 'bg-[#747474]' : i % 2 === 0 ? 'bg-[#565656]' : 'bg-[#474747]'}`}
      style={{ left: noteX(i * 2) }}
    />
  ));
}

function PianoRoll() {
  return (
    <div className="relative h-[342px] overflow-hidden">
      {rows.map((p) => (
        <div key={p} className="flex h-3">
          <i className={`w-10 ${isBlack(p) ? 'bg-[#1c1c1c]' : 'bg-[#232323]'}`} />
          <i className={`w-[654px] border-b ${isBlack(p) ? 'border-[#343434] bg-[#343434]' : p % 12 === 0 ? 'border-[#505050] bg-[#3c3c3c]' : p % 12 === 5 ? 'border-[#333] bg-[#3c3c3c]' : 'border-[#3c3c3c] bg-[#3c3c3c]'}`} />
          <i className={`flex-1 ${isBlack(p) ? 'bg-[#1c1c1c]' : 'bg-[#232323]'}`} />
        </div>
      ))}
      <GridLines />
      {notes.map(([i, p, h, sel]) => (
        <i key={i} className="absolute h-3 w-[10px] border" style={{ left: noteX(i), top: (TOP_PITCH - p) * 12, ...noteFill(h, sel, 20) }} />
      ))}
    </div>
  );
}

function VelocityLane() {
  return (
    <div className="relative h-[193px] overflow-hidden bg-[#2c2c2c]">
      <GridLines />
      {notes.map(([i, , h, sel]) => (
        <i key={i} className="absolute bottom-0 w-[9px] border" style={{ left: noteX(i), height: h, ...noteFill(h, sel, 15) }} />
      ))}
      {Array.from({ length: 7 }, (_, i) => (
        <i key={i} className={`absolute left-0 h-px w-full ${i % 2 ? 'bg-[#6c6c6c]/60' : 'bg-[#6c6c6c]/30'}`} style={{ top: 24 + i * 24 }} />
      ))}
    </div>
  );
}

const Grip = () => (
  <Svg className="h-[5px] w-6" box="0 0 24 5"><path d="M0 1h24M0 4h24" stroke="#d8d8d8" strokeWidth="2" strokeDasharray="2 1" /></Svg>
);

function MidiToolbar() {
  const tri = (d) => <Svg><path d={d} fill="#d8d8d8" /></Svg>;
  return (
    <div className="flex h-9 items-start bg-[#1d1d1d] pt-[3px] pl-[3px] text-[10px] text-[#ccc]">
      <ToolButton label="Solo"><span className="h-[14px] w-[14px] bg-[#cfcf55] text-[11px] leading-[14px] font-extrabold text-[#222]">S</span></ToolButton>
      <Group className="ml-[17px]">
        <ToolButton label="Rewind"><Svg><path d="M14 6L5 14l9 8M23 7l-9 7 9 7zM22 6l-9 8 9 8" stroke="#d8d8d8" strokeWidth="1.500" fill="#d8d8d8" fillOpacity="0.800" /></Svg></ToolButton>
        <ToolButton label="Forward"><Svg><path d="M14 6l9 8-9 8M5 7l9 7-9 7zM6 6l9 8-9 8" stroke="#d8d8d8" strokeWidth="1.500" fill="#d8d8d8" fillOpacity="0.800" /></Svg></ToolButton>
        <ToolButton label="Up"><Svg><path d="M14 10l6 13H8z" fill="#d8d8d8" /><path d="M6 22l8-16 8 16" stroke="#d8d8d8" strokeWidth="1.400" /></Svg></ToolButton>
        <ToolButton label="Down"><Svg><path d="M14 18L8 5h12z" fill="#d8d8d8" /><path d="M6 7l8 16 8-16" stroke="#d8d8d8" strokeWidth="1.400" /></Svg></ToolButton>
        <ToolButton label="Piano roll" active><Svg><g stroke="#e6eaea" strokeWidth="3"><path d="M6 5.500h18M6 11h9M6 16.500h18M6 22h18M17 11h7" /></g><path d="M15 8.200h9M6 13.800h9M13 19.200h11" stroke="#e6eaea" strokeWidth="1.500" /></Svg></ToolButton>
        <ToolButton label="Event list"><Svg><path d="M2 5.500h6M2 10.500h6M2 15.500h6M2 21.500h6" stroke="#eee" strokeWidth="3.500" /><path d="M10 5.500h14M10 10.500h14M10 15.500h14M10 21.500h14" stroke="#666" strokeWidth="3.500" /></Svg></ToolButton>
        <button type="button" className="ml-px h-7 w-[57px] bg-[#282828] text-[11px]">Item lane</button>
        <ToolButton label="Envelope lane" active><EnvItem /></ToolButton>
      </Group>
      <Group className="ml-8">
        <ToolButton label="View lanes">
          <Svg><rect x="5" y="12" width="18" height="7" fill="#8a9ad0" /><path d="M6 18h10v-5z" fill="#111" /><ellipse cx="20" cy="6" rx="4.500" ry="2.300" stroke="#bbb" /><circle cx="20" cy="6" r="1.300" fill="#bbb" /></Svg>
        </ToolButton>
        <ToolButton label="Grab">
          <Svg>
            <rect x="5" y="4" width="18" height="5" fill="#18d858" />
            <path d="M10 24l-5-7 1.500-1 3.500 3M11 18l-1-5M14 17v-6M17 17l1-5M19 19l2-4" stroke="#dedede" strokeWidth="2" strokeLinecap="round" />
            <path d="M9 17h11l-1 5-2 2h-7z" fill="#dedede" />
          </Svg>
        </ToolButton>
        <ToolButton label="Fix">FIX</ToolButton>
        <ToolButton label="Note info">
          <Svg><rect x="12" y="4" width="13" height="8" fill="#18d858" /><path d="M2 8h8q6 2 6 9t-7 9H2z" fill="#356f78" /><path d="M5 14h3v9M5 23h6" stroke="#ddd" strokeWidth="2" /><circle cx="8" cy="11" r="1.300" fill="#ddd" /></Svg>
        </ToolButton>
        <ToolButton label="Colour notes">
          <Svg><rect x="3" y="5" width="4" height="4" fill="#4a8a8e" /><rect x="8" y="4" width="8" height="5" fill="#18d858" /><rect x="17" y="4" width="7" height="5" fill="#4a7a80" /><rect x="18" y="11" width="7" height="5" fill="#4a7a80" /><circle cx="9" cy="19" r="7" fill="#d8d8d8" /><g fill="#333"><circle cx="6" cy="17" r="1.400" /><circle cx="10" cy="15.500" r="1.400" /><circle cx="13" cy="18.500" r="1.400" /><rect x="7" y="21" width="4" height="5" /></g></Svg>
        </ToolButton>
        <ToolButton label="Line tool"><Svg><path d="M5 22L24 7" stroke="#e0e0e0" strokeWidth="1.800" /></Svg></ToolButton>
        <ToolButton label="Curve tool"><Svg><path d="M8 19L20 10" stroke="#8c8ca0" strokeWidth="1.300" /><circle cx="7" cy="20" r="2" stroke="#8c8ca0" /><circle cx="21" cy="9" r="1.500" stroke="#8c8ca0" /></Svg></ToolButton>
      </Group>
      <div className="ml-[47px] flex gap-[17px]">
        <ToolButton label="Step input" active>
          <Svg><circle cx="8" cy="19" r="7" fill="#e0e0e0" /><g fill="#6a7a78"><circle cx="5" cy="17" r="1.400" /><circle cx="9" cy="15.500" r="1.400" /><circle cx="12" cy="18.500" r="1.400" /><rect x="6" y="21" width="4" height="5" /></g><path d="M19 12q5-1 4 4t-1 9q-2 2-3-1t0-12z" fill="#18d858" /><path d="M17 8l1 2M19 5v3M22 5l-1 3M25 8l-2 2" stroke="#18d858" strokeWidth="1.600" /></Svg>
        </ToolButton>
        <ToolButton label="Triplet"><Triplet /></ToolButton>
        <Group>
          <ToolButton label="1"><Note whole /></ToolButton>
          <ToolButton label="1/2"><Note open /></ToolButton>
          <ToolButton label="1/4"><Note /></ToolButton>
          <ToolButton label="1/8"><Note flags={1} /></ToolButton>
          <ToolButton label="1/16" active><Note flags={2} dim /></ToolButton>
          <ToolButton label="1/32"><Note flags={3} /></ToolButton>
          <ToolButton label="Snap" active><Magnet /></ToolButton>
        </Group>
        <Group>
          <ToolButton label="Previous">{tri('M20 6v16L7 14z')}</ToolButton>
          <ToolButton label="Erase">
            <Svg><path d="M5 16l12-9 7 1-1 7-10 8z" fill="#dedede" /><path d="M5 16l6-4 5 3-3 9-8-1z" fill="#d81818" /><path d="M8 15l5 1-2 6" stroke="#7a0808" /></Svg>
          </ToolButton>
          <ToolButton label="Next">{tri('M8 6v16l13-8z')}</ToolButton>
        </Group>
      </div>
    </div>
  );
}

function MidiEditor() {
  const winBtn = 'flex h-[19px] items-center justify-center border border-[#333] ring-1 ring-inset ring-[#777]';
  return (
    <section className="absolute top-[179px] left-[646px] w-[1059px] border border-[#7a8080] bg-[#585858] px-[6px] pb-[7px] shadow-[0_0_0_1px_#2a2a2a]">
      <div className="relative flex h-[29px] justify-between bg-[linear-gradient(#4e4e4e,#5a5a5a)]">
        <Svg className="mt-[5px] ml-[2px] h-4 w-4" box="0 0 16 16">
          <path d="M2 4q6-6 12 0l-5 2z" fill="#2a8ad0" /><path d="M1 5l7 3-1 8q-6-4-6-11z" fill="#4fb030" /><path d="M15 5q0 8-7 11l1-8z" fill="#d06050" /><path d="M3 4q5 0 5 10" stroke="#fff" strokeWidth="1.400" />
        </Svg>
        <h2 className="absolute inset-x-0 top-1 mx-auto w-fit rounded-full bg-white/15 px-2 text-[14px] leading-5 text-[#1e1e1e] shadow-[0_0_6px_3px_rgba(255,255,255,0.12)]">MIDI take: untitled MIDI item</h2>
        <div className="flex gap-px">
          <Svg className="mt-[2px] mr-[5px] h-4 w-3" box="0 0 12 16"><path d="M3 1h6M4 1v7M8 1v7M6 9v6M0 8.500h12" stroke="#fff" strokeWidth="1.600" /><path d="M7 1h2v7H7z" fill="#fff" /></Svg>
          <button type="button" aria-label="Minimize" className={`${winBtn} w-[26px]`}><i className="mt-1 h-1 w-3 bg-[#a8a8a8]" /></button>
          <button type="button" aria-label="Maximize" className={`${winBtn} w-[26px]`}><i className="h-2 w-[10px] border-2 border-white" /></button>
          <button type="button" aria-label="Close" className={`${winBtn} w-[44px]`}><Svg className="h-[9px] w-[9px]" box="0 0 9 9"><path d="M1 0l7 9M8 0L1 9" stroke="#fff" strokeWidth="2.200" /></Svg></button>
        </div>
      </div>
      <nav className="flex h-5 items-center gap-[15px] border-b border-[#ddd] bg-[#f5f6f8] pl-[7px] text-[11px] text-[#6a6a6a]">
        {['File', 'Edit', 'Navigate', 'Options', 'View', 'Contents', 'Actions'].map((m) => <button key={m} type="button">{m}</button>)}
      </nav>
      <MidiToolbar />

      <div className="flex bg-[#1d1d1d] pl-[2px]">
        <div className="flex w-[129px] flex-col border-r border-[#161616] bg-[#2c2c2c]">
          <div className="flex h-16 gap-[6px] pt-[5px] pl-[6px] text-[11px] text-[#c8c8c8]">
            <span className="flex h-[18px] w-[52px] items-center justify-center border border-[#1c1c1c] bg-[#282828]">5.3.17</span>
            <span className="flex h-[18px] w-[52px] items-center justify-center gap-[6px] border border-[#1c1c1c] bg-[#282828]"><span>D#3</span><span>51</span></span>
          </div>
          <Piano />
          <div className="mt-auto mb-[17px] flex items-end gap-[2px] pl-[2px]">
            <Select label="Lane" value="Velocity" width="w-[114px]" />
            <button type="button" aria-label="Add lane" className="flex h-[10px] w-[10px] items-center justify-center border border-[#aaa]"><Svg className="h-[6px] w-[6px]" box="0 0 6 6"><path d="M3 0v6M0 3h6" stroke="#ccc" /></Svg></button>
          </div>
        </div>
        <div className="min-w-0 flex-1">
          <div className="relative h-16 overflow-hidden bg-[#2c2c2c] text-[10px] text-[#b4b4b4]">
            {[0, 1, 2, 3, 4, 5].map((i) => (
              <React.Fragment key={i}>
                <span className="absolute top-9 h-7 border-l border-[#b0b0b0] pl-[3px] text-[11px] leading-5" style={{ left: noteX(i * 16) }}>{i + 1}</span>
                {i < 5 && <span className="absolute top-[47px] -ml-2 leading-3" style={{ left: noteX(i * 16 + 8) }}>{i + 1}.3</span>}
              </React.Fragment>
            ))}
            <Svg className="absolute bottom-0 left-[306px] h-[11px] w-[21px]" box="0 0 21 11"><path d="M1 0.500h19L10.500 10.500z" fill="#1a6a1a" stroke="#00ff00" /></Svg>
          </div>
          <div className="relative">
            <PianoRoll />
            <div className="flex h-[9px] items-center justify-between border-b border-black bg-[#161616] px-[2px]"><Grip /><Grip /></div>
            <VelocityLane />
            <i className="absolute top-0 left-[316px] h-full w-px bg-[#00ff00]" />
          </div>
          <div className="flex h-[17px] items-center bg-[#333]">
            <Arrow dir="left" />
            <div className="ml-1 flex h-[11px] flex-1 items-center justify-between rounded-full bg-[#565656] px-[3px]">
              <i className="h-[5px] w-[5px] rounded-full bg-[#222]" /><i className="h-[7px] w-[2px] bg-[#222]" /><i className="h-[5px] w-[5px] rounded-full bg-[#222]" />
            </div>
            <div className="ml-1 flex w-[55px] items-center justify-between pr-1"><Arrow dir="right" /><Plus /><i className="h-2 w-px bg-[#222]" /><Minus /></div>
          </div>
        </div>
        <div className="mt-16 mr-px mb-[17px] flex w-[17px] flex-col items-center bg-[#363636]">
          <Arrow dir="up" />
          <div className="mt-[229px] flex h-[98px] w-[11px] items-center justify-center rounded-full bg-[#565656]"><i className="h-[2px] w-[7px] bg-[#222]" /></div>
          <div className="mt-auto flex h-[55px] flex-col items-center justify-between pb-2"><Arrow dir="down" /><Plus /><i className="h-px w-2 bg-[#222]" /><Minus /></div>
        </div>
      </div>

      <div className="flex h-7 items-center bg-[#1d1d1d] pr-[3px] pl-[3px] text-[11px] text-[#c4c4c4]">
        <div className="flex gap-[2px]">
          {['prev', 'play', 'pause', 'stop', 'next'].map((g) => (
            <button key={g} type="button" aria-label={g} className="flex h-[22px] w-[22px] items-center justify-center bg-linear-to-b from-[#333] to-[#262626] opacity-80">{glyph[g]}</button>
          ))}
          <button type="button" aria-label="loop" className="flex h-[22px] w-[22px] items-center justify-center rounded-full bg-[#3a3a3a]">{glyph.loop}</button>
        </div>
        <label htmlFor="grid" className="ml-[14px] w-[29px]">Grid:</label>
        <Select id="grid" value="1/16" width="w-[54px]" combo />
        <span className="ml-1"><Select label="Grid type" value="straight" width="w-[60px]" /></span>
        <label htmlFor="notes" className="ml-[10px] w-[39px]">Notes:</label>
        <Select id="notes" value="Grid" width="w-[54px]" combo />
        <label className="ml-[14px] flex items-center gap-[5px]">
          <input type="checkbox" className="h-[13px] w-[13px] appearance-none border border-[#777] bg-white" />
          Key snap
        </label>
        <label htmlFor="color" className="ml-[12px] w-[36px]">Color:</label>
        <Select id="color" value="Velocity" width="w-[83px]" />
        <div className="ml-auto flex gap-[3px]">
          <Select label="Track" value="Track 7" width="w-[89px]" />
          <Select label="Channels" value="All channels" width="w-[89px]" />
        </div>
      </div>
    </section>
  );
}

export default function App() {
  return (
    <div className="relative flex min-h-screen w-full flex-col overflow-hidden bg-[#1f1f1f] font-['Open_Sans',sans-serif]">
      <svg className="absolute h-0 w-0" aria-hidden="true">
        <defs>
          <linearGradient id="rainbow">
            <stop offset="0" stopColor="#f02020" /><stop offset="0.200" stopColor="#f0a020" /><stop offset="0.350" stopColor="#a030c0" />
            <stop offset="0.550" stopColor="#2040f0" /><stop offset="0.750" stopColor="#20c060" /><stop offset="1" stopColor="#f04020" />
          </linearGradient>
          <linearGradient id="knob" x2="0" y2="1"><stop stopColor="#999" /><stop offset="1" stopColor="#3c3c3c" /></linearGradient>
        </defs>
      </svg>
      <MenuBar />
      <MainToolbar />
      <main className="flex flex-1">
        <Sidebar />
        <div className="flex min-w-0 flex-1 flex-col">
          <div className="flex">
            <TrackList />
            <Arrange />
          </div>
          <Mixer />
        </div>
        <Master />
      </main>
      <Transport />
      <MidiEditor />
      <Svg className="absolute top-[57px] left-[1868px] h-5 w-3" box="0 0 12 20"><path d="M1 1v15l3.500-3 2.500 6 2.500-1-2.500-6H11z" fill="#fff" stroke="#000" /></Svg>
    </div>
  );
}
